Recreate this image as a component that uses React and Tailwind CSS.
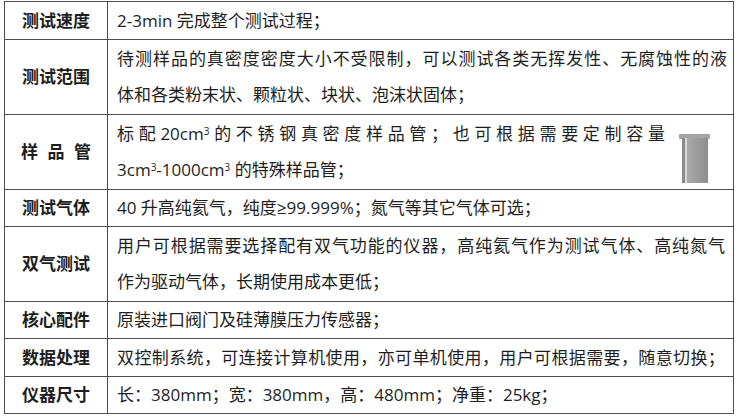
const FONT = { fontFamily: '"Open Sans", "Noto Sans CJK SC", sans-serif' };

const Cm3 = () => (
  <>
    cm<sup className="text-[10px]">3</sup>
  </>
);

const Tube = () => (
  <svg width="34" height="52" viewBox="0 0 34 52" className="shrink-0">
    <defs>
      <linearGradient id="tb" x1="0" x2="1" y1="0" y2="0">
        <stop offset="0" stopColor="#a9a9a9" />
        <stop offset="0.5" stopColor="#9b9b9b" />
        <stop offset="1" stopColor="#8e8e8e" />
      </linearGradient>
    </defs>
    <rect x="1" y="1" width="31" height="5" rx="1" fill="#a4a4a4" />
    <rect x="4" y="5" width="3" height="45" fill="#8a8a8a" />
    <rect x="9" y="5" width="21" height="45" fill="url(#tb)" />
    <rect x="7" y="5" width="2" height="45" fill="#d8d8d8" />
  </svg>
);

const Label = ({ children }) => (
  <div className="flex w-[103px] shrink-0 items-center justify-center border-r border-[#4d4d4d] text-[17px] font-bold text-[#1e1e1e]">
    {children}
  </div>
);

const Row = ({ label, h, first, children }) => (
  <div className={`flex ${h} ${first ? "" : "border-t border-[#4d4d4d]"}`}>
    <Label>{label}</Label>
    <div className="flex flex-1 flex-col justify-center pl-[9px] pr-[6px] text-[17px] leading-[36px] text-[#1e1e1e]">
      {children}
    </div>
  </div>
);

// spread a line of characters across the full cell width
const Spread = ({ text, className = "" }) => (
  <div className={`flex justify-between ${className}`}>
    {text.split("").map((c, i) => (
      <span key={i}>{c}</span>
    ))}
  </div>
);

export default function App() {
  return (
    <div lang="zh-CN" className="h-[420px] w-[741px] bg-white pl-[4px] pt-[1px]" style={FONT}>
      <div className="w-[730px] border border-[#4d4d4d]">
        <Row label="测试速度" h="h-[37px]" first>
          <div>2-3min 完成整个测试过程；</div>
        </Row>
        <Row label="测试范围" h="h-[75px]">
          <Spread text="待测样品的真密度密度大小不受限制，可以测试各类无挥发性、无腐蚀性的液" />
          <div>体和各类粉末状、颗粒状、块状、泡沫状固体；</div>
        </Row>
        <Row label={
          <div className="flex w-[70px] justify-between">
            <span>样</span><span>品</span><span>管</span>
          </div>
        } h="h-[75px]">
          <div className="flex items-center">
            <div className="w-[548px]">
              <div className="flex justify-between">
                <span>标</span><span>配</span><span>20<Cm3 /></span><span>的</span>
                {"不锈钢真密度样品管；也可根据需要定制容量".split("").map((c, i) => (
                  <span key={i}>{c}</span>
                ))}
              </div>
              <div>3<Cm3 />-1000<Cm3 /> 的特殊样品管；</div>
            </div>
            <div className="ml-[13px] mt-[14px]">
              <Tube />
            </div>
          </div>
        </Row>
        <Row label="测试气体" h="h-[37px]">
          <div>40 升高纯氦气，纯度≥99.999%；氮气等其它气体可选；</div>
        </Row>
        <Row label="双气测试" h="h-[75px]">
          <Spread className="pr-[2px]" text="用户可根据需要选择配有双气功能的仪器，高纯氦气作为测试气体、高纯氮气" />
          <div>作为驱动气体，长期使用成本更低；</div>
        </Row>
        <Row label="核心配件" h="h-[37px]">
          <div>原装进口阀门及硅薄膜压力传感器；</div>
        </Row>
        <Row label="数据处理" h="h-[38px]">
          <Spread className="pr-[2px]" text="双控制系统，可连接计算机使用，亦可单机使用，用户可根据需要，随意切换；" />
        </Row>
        <Row label="仪器尺寸" h="h-[37px]">
          <div>长：380mm；宽：380mm，高：480mm；净重：25kg；</div>
        </Row>
      </div>
    </div>
  );
}
